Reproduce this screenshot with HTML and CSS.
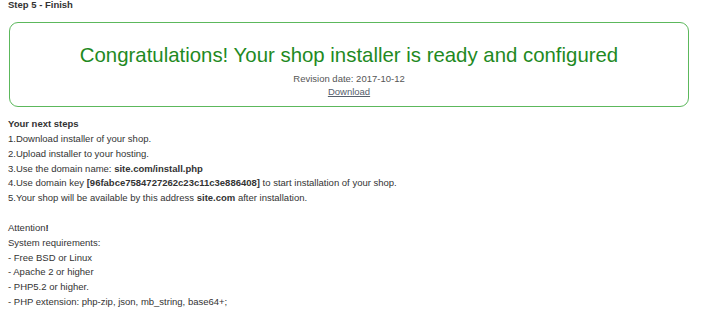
FILE: index.html
```html
<!DOCTYPE html>
<html>
<head>
<meta charset="utf-8">
<link rel="stylesheet" href="styles.css">
</head>
<body>
<div class="page">
  <div class="step-title">Step 5 - Finish</div>
  <div class="finish-box">
    <h1 class="congrats">Congratulations! Your shop installer is ready and configured</h1>
    <div class="revision">Revision date: 2017-10-12</div>
    <div class="download-row"><a class="download" href="#">Download</a></div>
  </div>
  <div class="steps">
    <div class="steps-title">Your next steps</div>
    <div>1.Download installer of your shop.</div>
    <div>2.Upload installer to your hosting.</div>
    <div>3.Use the domain name: <b>site.com/install.php</b></div>
    <div>4.Use domain key <b>[96fabce7584727262c23c11c3e886408]</b> to start installation of your shop.</div>
    <div>5.Your shop will be available by this address <b>site.com</b> after installation.</div>
    <div class="blank">&nbsp;</div>
    <div>Attention<b>!</b></div>
    <div>System requirements:</div>
    <div>- Free BSD or Linux</div>
    <div>- Apache 2 or higher</div>
    <div>- PHP5.2 or higher.</div>
    <div>- PHP extension: php-zip, json, mb_string, base64+;</div>
  </div>
</div>
</body>
</html>
```
FILE: styles.css
```css
html, body {
  margin: 0;
  padding: 0;
  background: #fff;
}
body {
  font-family: "Liberation Sans", Arial, sans-serif;
  font-size: 9.5px;
  color: #333;
}
.page {
  padding: 0 8px;
}
.step-title {
  font-weight: bold;
  line-height: 10px;
  color: #333;
}
.finish-box {
  margin: 12px 28px 0 1px;
  border: 1px solid #5cb85c;
  border-radius: 9px;
  height: 85px;
  box-sizing: border-box;
  text-align: center;
  padding-top: 20px;
}
.congrats {
  margin: 0;
  font-weight: normal;
  font-size: 20.4px;
  line-height: 24px;
  color: #1f8a1f;
}
.revision {
  margin-top: 5px;
  line-height: 13px;
  color: #555;
}
.download-row {
  line-height: 13px;
}
.download {
  color: #56606c;
  text-decoration: underline;
}
.steps {
  margin-top: 10px;
  line-height: 14.85px;
}
.steps-title {
  font-weight: bold;
}
```
